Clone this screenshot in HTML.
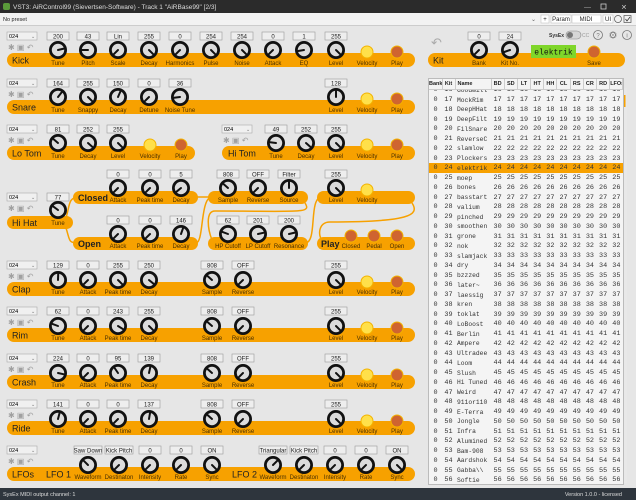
<!DOCTYPE html>
<html><head><meta charset="utf-8"><style>
body{margin:0;width:636px;height:500px;overflow:hidden;background:#e6e6e6;font-family:"Liberation Sans",sans-serif}
svg{position:absolute;left:0;top:0}
.b{fill:#eeeeee;stroke:#9a9a9a;stroke-width:.6}
.t{font-size:6px;text-anchor:middle;fill:#222}
.l{font-size:6px;text-anchor:middle;fill:#4a3000}
.n{font-size:9px;fill:#222}
.nb{font-size:9px;fill:#222;font-weight:bold}
.p path{stroke:#111;stroke-width:2;fill:none;stroke-linecap:round}
.bar{fill:#f7a100}
.vel{fill:#ffe04a;stroke:#f3b300;stroke-width:1}
.ply{fill:#cf6430;stroke:#f3b300;stroke-width:1}
.dd{fill:#f0f0f0;stroke:#aaa;stroke-width:.6}
.ic{font-size:8px;fill:#a0a0a0}
#tbl{position:absolute;left:428px;top:78px;width:194px;height:405px;background:#f4f4f4;border:1px solid #bbb;overflow:hidden}
#hd{position:absolute;left:0;top:0;width:194px;height:10px;background:#f4f4f4;z-index:2}
#rows{position:absolute;left:0;top:6.4px}
table{border-collapse:collapse;table-layout:fixed;width:194px}
td,th{padding:0;text-align:center;white-space:nowrap;overflow:hidden}
#hd th{font:bold 5.5px "Liberation Sans",sans-serif;height:10px;border-right:1px solid #ccc;border-bottom:1px solid #ccc;color:#222}
#rows td{font:6.8px "Liberation Mono",monospace;height:9.75px;color:#333}
#rows td:nth-child(3){text-align:left;padding-left:2px;font-size:6.3px}
#hd th:nth-child(3){text-align:left;padding-left:2px}
tr.s td{background:#f7a100}
</style></head><body>
<svg width="636" height="500" viewBox="0 0 636 500">
<defs><g id="k"><circle r="7.6" fill="#dcdcdc" stroke="#111" stroke-width="2.8"/></g></defs>
<rect width="636" height="13" fill="#2b2b2b"/>
<rect x="3" y="3" width="7" height="7" rx="2" fill="#5a9a3a"/>
<text x="13" y="9" font-size="6.5" fill="#ddd">VST3: AiRControl99 (Sievertsen-Software) - Track 1 "AiRBase99" [2/3]</text>
<text x="584" y="9" font-size="7" fill="#aaa">—</text>
<rect x="601" y="4" width="5" height="5" fill="none" stroke="#ccc" stroke-width=".8"/>
<text x="621" y="9.5" font-size="7" fill="#ccc">✕</text>
<rect y="13" width="636" height="13" fill="#f2f2f2"/>
<line x1="0" y1="25.5" x2="636" y2="25.5" stroke="#ccc"/>
<text x="3" y="21" font-size="5.5" fill="#222">No preset</text>
<text x="531" y="21" font-size="6" fill="#666">⌄</text>
<rect x="541" y="15" width="8" height="8" fill="#fff" stroke="#bbb" stroke-width=".5"/><text x="545" y="21" class="t">+</text>
<rect x="551" y="15" width="20" height="8" fill="#fff" stroke="#bbb" stroke-width=".5"/><text x="561" y="21" class="t">Param</text>
<rect x="572" y="15" width="29" height="8" fill="#fff" stroke="#bbb" stroke-width=".5"/><text x="586" y="21" class="t">MIDI</text>
<rect x="603" y="15" width="10" height="8" fill="#fff" stroke="#bbb" stroke-width=".5"/><text x="608" y="21" class="t">UI</text>
<circle cx="618" cy="19" r="3.5" fill="none" stroke="#555" stroke-width=".7"/>
<rect x="624" y="15.5" width="7" height="7" fill="none" stroke="#555" stroke-width=".7"/><path d="M625.5 19l1.5 2 3-4" stroke="#333" fill="none" stroke-width=".8"/>
<rect y="488" width="636" height="12" fill="#2e353d"/>
<text x="3" y="496" font-size="5.5" fill="#ddd">SysEx MIDI output channel: 1</text>
<text x="622" y="496" font-size="5.5" fill="#ddd" text-anchor="end">Version 1.0.0 - licensed</text>

<g class="bar">
<rect x="7" y="53" width="408" height="14" rx="7"/>
<rect x="428" y="53" width="197" height="14" rx="7"/>
<rect x="7" y="100" width="408" height="14" rx="7"/>
<rect x="7" y="146" width="188" height="14" rx="7"/>
<rect x="222" y="146" width="193" height="14" rx="7"/>
<rect x="7" y="216" width="66" height="13" rx="6.5"/>
<rect x="73" y="191" width="125" height="13" rx="6.5"/>
<rect x="73" y="237" width="125" height="13" rx="6.5"/>
<rect x="208" y="191" width="100" height="13" rx="6.5"/>
<rect x="208" y="237" width="100" height="13" rx="6.5"/>
<rect x="317" y="191" width="98" height="13" rx="6.5"/>
<rect x="317" y="237" width="98" height="13" rx="6.5"/>
<rect x="7" y="282" width="408" height="14" rx="7"/>
<rect x="7" y="328" width="408" height="14" rx="7"/>
<rect x="7" y="375" width="408" height="14" rx="7"/>
<rect x="7" y="421" width="408" height="14" rx="7"/>
<rect x="7" y="467" width="408" height="14" rx="7"/>
</g>
<g fill="none" stroke="#f7a100" stroke-width="1.5">
<path d="M66 218C70 205 68 198 78 197"/>
<path d="M66 228C70 240 68 243 78 243"/>
<path d="M196 197H212"/>
<path d="M196 243C204 243 200 197 212 197"/>
<path d="M305 203C312 214 300 211 215 211C205 211 208 230 212 240"/>
<path d="M305 243C318 243 308 197 322 197"/>
<path d="M412 203C420 215 410 222 330 222C318 222 318 236 322 240"/>
</g>

<text x="12" y="63.5" class="n">Kick</text>
<text x="433" y="63.5" class="n">Kit</text>
<text x="12" y="110.5" class="n">Snare</text>
<text x="12" y="156.5" class="n">Lo Tom</text>
<text x="228" y="156.5" class="n">Hi Tom</text>
<text x="12" y="226" class="n">Hi Hat</text>
<text x="78" y="201" class="nb">Closed</text>
<text x="78" y="247" class="nb">Open</text>
<text x="321" y="247" class="nb">Play</text>
<text x="12" y="292.5" class="n">Clap</text>
<text x="12" y="338.5" class="n">Rim</text>
<text x="12" y="385.5" class="n">Crash</text>
<text x="12" y="431.5" class="n">Ride</text>
<text x="12" y="477.5" class="n">LFOs</text>
<text x="46" y="477.5" class="n">LFO 1</text>
<text x="232" y="477.5" class="n">LFO 2</text>

<g>
<rect x="7" y="32" width="30" height="8" class="dd"/><text x="9" y="38" font-size="5.5">024</text><text x="31" y="38" font-size="5" fill="#777">⌄</text>
<rect x="7" y="79" width="30" height="8" class="dd"/><text x="9" y="85" font-size="5.5">024</text><text x="31" y="85" font-size="5" fill="#777">⌄</text>
<rect x="7" y="125" width="30" height="8" class="dd"/><text x="9" y="131" font-size="5.5">024</text><text x="31" y="131" font-size="5" fill="#777">⌄</text>
<rect x="222" y="125" width="30" height="8" class="dd"/><text x="224" y="131" font-size="5.5">024</text><text x="246" y="131" font-size="5" fill="#777">⌄</text>
<rect x="7" y="193" width="30" height="8" class="dd"/><text x="9" y="199" font-size="5.5">024</text><text x="31" y="199" font-size="5" fill="#777">⌄</text>
<rect x="7" y="261" width="30" height="8" class="dd"/><text x="9" y="267" font-size="5.5">024</text><text x="31" y="267" font-size="5" fill="#777">⌄</text>
<rect x="7" y="307" width="30" height="8" class="dd"/><text x="9" y="313" font-size="5.5">024</text><text x="31" y="313" font-size="5" fill="#777">⌄</text>
<rect x="7" y="354" width="30" height="8" class="dd"/><text x="9" y="360" font-size="5.5">024</text><text x="31" y="360" font-size="5" fill="#777">⌄</text>
<rect x="7" y="400" width="30" height="8" class="dd"/><text x="9" y="406" font-size="5.5">024</text><text x="31" y="406" font-size="5" fill="#777">⌄</text>
<rect x="7" y="446" width="30" height="8" class="dd"/><text x="9" y="452" font-size="5.5">024</text><text x="31" y="452" font-size="5" fill="#777">⌄</text>
</g>
<g class="ic">
<text x="8" y="50">✱ ▣ ↶</text><text x="8" y="97">✱ ▣ ↶</text><text x="8" y="143">✱ ▣ ↶</text><text x="223" y="143">✱ ▣ ↶</text>
<text x="8" y="211">✱ ▣ ↶</text><text x="8" y="279">✱ ▣ ↶</text><text x="8" y="325">✱ ▣ ↶</text><text x="8" y="372">✱ ▣ ↶</text>
<text x="8" y="418">✱ ▣ ↶</text><text x="8" y="464">✱ ▣ ↶</text>
</g>
<text x="431" y="47" font-size="13" fill="#aaa">↶</text>

<g>
<rect x="47" y="32" width="22" height="8" class="b"/><text x="58" y="38.3" class="t">200</text>
<rect x="77" y="32" width="22" height="8" class="b"/><text x="88" y="38.3" class="t">43</text>
<rect x="107" y="32" width="22" height="8" class="b"/><text x="118" y="38.3" class="t">Lin</text>
<rect x="138" y="32" width="22" height="8" class="b"/><text x="149" y="38.3" class="t">255</text>
<rect x="169" y="32" width="22" height="8" class="b"/><text x="180" y="38.3" class="t">0</text>
<rect x="200" y="32" width="22" height="8" class="b"/><text x="211" y="38.3" class="t">254</text>
<rect x="231" y="32" width="22" height="8" class="b"/><text x="242" y="38.3" class="t">254</text>
<rect x="262" y="32" width="22" height="8" class="b"/><text x="273" y="38.3" class="t">0</text>
<rect x="293" y="32" width="22" height="8" class="b"/><text x="304" y="38.3" class="t">1</text>
<rect x="325" y="32" width="22" height="8" class="b"/><text x="336" y="38.3" class="t">255</text>
<rect x="468" y="32" width="22" height="8" class="b"/><text x="479" y="38.3" class="t">0</text>
<rect x="499" y="32" width="22" height="8" class="b"/><text x="510" y="38.3" class="t">24</text>

<rect x="47" y="79" width="22" height="8" class="b"/><text x="58" y="85.3" class="t">164</text>
<rect x="77" y="79" width="22" height="8" class="b"/><text x="88" y="85.3" class="t">255</text>
<rect x="107" y="79" width="22" height="8" class="b"/><text x="118" y="85.3" class="t">150</text>
<rect x="138" y="79" width="22" height="8" class="b"/><text x="149" y="85.3" class="t">0</text>
<rect x="169" y="79" width="22" height="8" class="b"/><text x="180" y="85.3" class="t">36</text>
<rect x="325" y="79" width="22" height="8" class="b"/><text x="336" y="85.3" class="t">128</text>

<rect x="47" y="125" width="22" height="8" class="b"/><text x="58" y="131.3" class="t">81</text>
<rect x="77" y="125" width="22" height="8" class="b"/><text x="88" y="131.3" class="t">252</text>
<rect x="107" y="125" width="22" height="8" class="b"/><text x="118" y="131.3" class="t">255</text>
<rect x="265" y="125" width="22" height="8" class="b"/><text x="276" y="131.3" class="t">49</text>
<rect x="295" y="125" width="22" height="8" class="b"/><text x="306" y="131.3" class="t">252</text>
<rect x="325" y="125" width="22" height="8" class="b"/><text x="336" y="131.3" class="t">255</text>

<rect x="47" y="193" width="22" height="8" class="b"/><text x="58" y="199.3" class="t">77</text>
<rect x="107" y="170" width="22" height="8" class="b"/><text x="118" y="176.3" class="t">0</text>
<rect x="139" y="170" width="22" height="8" class="b"/><text x="150" y="176.3" class="t">0</text>
<rect x="170" y="170" width="22" height="8" class="b"/><text x="181" y="176.3" class="t">5</text>
<rect x="107" y="216" width="22" height="8" class="b"/><text x="118" y="222.3" class="t">0</text>
<rect x="139" y="216" width="22" height="8" class="b"/><text x="150" y="222.3" class="t">0</text>
<rect x="170" y="216" width="22" height="8" class="b"/><text x="181" y="222.3" class="t">146</text>
<rect x="217" y="170" width="22" height="8" class="b"/><text x="228" y="176.3" class="t">808</text>
<rect x="247" y="170" width="22" height="8" class="b"/><text x="258" y="176.3" class="t">OFF</text>
<rect x="278" y="170" width="22" height="8" class="b"/><text x="289" y="176.3" class="t">Filter</text>
<rect x="217" y="216" width="22" height="8" class="b"/><text x="228" y="222.3" class="t">62</text>
<rect x="247" y="216" width="22" height="8" class="b"/><text x="258" y="222.3" class="t">201</text>
<rect x="278" y="216" width="22" height="8" class="b"/><text x="289" y="222.3" class="t">200</text>
<rect x="325" y="170" width="22" height="8" class="b"/><text x="336" y="176.3" class="t">255</text>

<rect x="47" y="261" width="22" height="8" class="b"/><text x="58" y="267.3" class="t">129</text>
<rect x="77" y="261" width="22" height="8" class="b"/><text x="88" y="267.3" class="t">0</text>
<rect x="107" y="261" width="22" height="8" class="b"/><text x="118" y="267.3" class="t">255</text>
<rect x="138" y="261" width="22" height="8" class="b"/><text x="149" y="267.3" class="t">250</text>
<rect x="201" y="261" width="22" height="8" class="b"/><text x="212" y="267.3" class="t">808</text>
<rect x="232" y="261" width="22" height="8" class="b"/><text x="243" y="267.3" class="t">OFF</text>
<rect x="325" y="261" width="22" height="8" class="b"/><text x="336" y="267.3" class="t">255</text>

<rect x="47" y="307" width="22" height="8" class="b"/><text x="58" y="313.3" class="t">62</text>
<rect x="77" y="307" width="22" height="8" class="b"/><text x="88" y="313.3" class="t">0</text>
<rect x="107" y="307" width="22" height="8" class="b"/><text x="118" y="313.3" class="t">243</text>
<rect x="138" y="307" width="22" height="8" class="b"/><text x="149" y="313.3" class="t">255</text>
<rect x="201" y="307" width="22" height="8" class="b"/><text x="212" y="313.3" class="t">808</text>
<rect x="232" y="307" width="22" height="8" class="b"/><text x="243" y="313.3" class="t">OFF</text>
<rect x="325" y="307" width="22" height="8" class="b"/><text x="336" y="313.3" class="t">255</text>

<rect x="47" y="354" width="22" height="8" class="b"/><text x="58" y="360.3" class="t">224</text>
<rect x="77" y="354" width="22" height="8" class="b"/><text x="88" y="360.3" class="t">0</text>
<rect x="107" y="354" width="22" height="8" class="b"/><text x="118" y="360.3" class="t">95</text>
<rect x="138" y="354" width="22" height="8" class="b"/><text x="149" y="360.3" class="t">139</text>
<rect x="201" y="354" width="22" height="8" class="b"/><text x="212" y="360.3" class="t">808</text>
<rect x="232" y="354" width="22" height="8" class="b"/><text x="243" y="360.3" class="t">OFF</text>
<rect x="325" y="354" width="22" height="8" class="b"/><text x="336" y="360.3" class="t">255</text>

<rect x="47" y="400" width="22" height="8" class="b"/><text x="58" y="406.3" class="t">141</text>
<rect x="77" y="400" width="22" height="8" class="b"/><text x="88" y="406.3" class="t">0</text>
<rect x="107" y="400" width="22" height="8" class="b"/><text x="118" y="406.3" class="t">0</text>
<rect x="138" y="400" width="22" height="8" class="b"/><text x="149" y="406.3" class="t">137</text>
<rect x="201" y="400" width="22" height="8" class="b"/><text x="212" y="406.3" class="t">808</text>
<rect x="232" y="400" width="22" height="8" class="b"/><text x="243" y="406.3" class="t">OFF</text>
<rect x="325" y="400" width="22" height="8" class="b"/><text x="336" y="406.3" class="t">255</text>

<rect x="74" y="446" width="28" height="8" class="b"/><text x="88" y="452.3" class="t">Saw Down</text>
<rect x="105" y="446" width="28" height="8" class="b"/><text x="119" y="452.3" class="t">Kick Pitch</text>
<rect x="139" y="446" width="22" height="8" class="b"/><text x="150" y="452.3" class="t">0</text>
<rect x="170" y="446" width="22" height="8" class="b"/><text x="181" y="452.3" class="t">0</text>
<rect x="201" y="446" width="22" height="8" class="b"/><text x="212" y="452.3" class="t">ON</text>
<rect x="259" y="446" width="28" height="8" class="b"/><text x="273" y="452.3" class="t">Triangular</text>
<rect x="290" y="446" width="28" height="8" class="b"/><text x="304" y="452.3" class="t">Kick Pitch</text>
<rect x="324" y="446" width="22" height="8" class="b"/><text x="335" y="452.3" class="t">0</text>
<rect x="355" y="446" width="22" height="8" class="b"/><text x="366" y="452.3" class="t">0</text>
<rect x="386" y="446" width="22" height="8" class="b"/><text x="397" y="452.3" class="t">ON</text>
</g>

<g class="p">
<use href="#k" x="58" y="50"/><path d="M58 50l5.8-1.4"/>
<use href="#k" x="88" y="50"/><path d="M88 50l-6 0"/>
<use href="#k" x="118" y="50"/><path d="M118 50l-4.2 4.2"/>
<use href="#k" x="149" y="50"/><path d="M149 50l4.2 4.2"/>
<use href="#k" x="180" y="50"/><path d="M180 50l-4.2 4.2"/>
<use href="#k" x="211" y="50"/><path d="M211 50l4.2 4.2"/>
<use href="#k" x="242" y="50"/><path d="M242 50l4.2 4.2"/>
<use href="#k" x="273" y="50"/><path d="M273 50l-4.2 4.2"/>
<use href="#k" x="304" y="50"/><path d="M304 50l-5.9 1"/>
<use href="#k" x="336" y="50"/><path d="M336 50l4.2 4.2"/>
<use href="#k" x="479" y="50"/><path d="M479 50l-4.2 4.2"/>
<use href="#k" x="510" y="50"/><path d="M510 50l-5.7 2"/>

<use href="#k" x="58" y="97"/><path d="M58 97l3.7-4.7"/>
<use href="#k" x="88" y="97"/><path d="M88 97l4.2 4.2"/>
<use href="#k" x="118" y="97"/><path d="M118 97l2.4-5.5"/>
<use href="#k" x="149" y="97"/><path d="M149 97l-4.2 4.2"/>
<use href="#k" x="180" y="97"/><path d="M180 97l-6 .7"/>
<use href="#k" x="336" y="97"/><path d="M336 97l0-6"/>

<use href="#k" x="58" y="143"/><path d="M58 143l-4.5-3.9"/>
<use href="#k" x="88" y="143"/><path d="M88 143l4.5 4"/>
<use href="#k" x="118" y="143"/><path d="M118 143l4.2 4.2"/>
<use href="#k" x="276" y="143"/><path d="M276 143l-6-.7"/>
<use href="#k" x="306" y="143"/><path d="M306 143l4.5 4"/>
<use href="#k" x="336" y="143"/><path d="M336 143l4.2 4.2"/>

<use href="#k" x="58" y="210"/><path d="M58 210l-4.8-3.6"/>
<use href="#k" x="118" y="188"/><path d="M118 188l-4.2 4.2"/>
<use href="#k" x="150" y="188"/><path d="M150 188l-4.2 4.2"/>
<use href="#k" x="181" y="188"/><path d="M181 188l-4.6 3.8"/>
<use href="#k" x="118" y="234"/><path d="M118 234l-4.2 4.2"/>
<use href="#k" x="150" y="234"/><path d="M150 234l-4.2 4.2"/>
<use href="#k" x="181" y="234"/><path d="M181 234l2-5.7"/>
<use href="#k" x="228" y="188"/><path d="M228 188l-4.5-4"/>
<use href="#k" x="258" y="188"/><path d="M258 188l-4.2 4.2"/>
<use href="#k" x="289" y="188"/><path d="M289 188l0-6"/>
<use href="#k" x="228" y="234"/><path d="M228 234l-5.6-2.1"/>
<use href="#k" x="258" y="234"/><path d="M258 234l5.9-1.3"/>
<use href="#k" x="289" y="234"/><path d="M289 234l5.8-1.4"/>
<use href="#k" x="336" y="188"/><path d="M336 188l4.2 4.2"/>

<use href="#k" x="58" y="280"/><path d="M58 280l.2-6"/>
<use href="#k" x="88" y="280"/><path d="M88 280l-4.2 4.2"/>
<use href="#k" x="118" y="280"/><path d="M118 280l4.2 4.2"/>
<use href="#k" x="149" y="280"/><path d="M149 280l4.6 3.8"/>
<use href="#k" x="212" y="280"/><path d="M212 280l-4.5-4"/>
<use href="#k" x="243" y="280"/><path d="M243 280l-4.2 4.2"/>
<use href="#k" x="336" y="280"/><path d="M336 280l4.2 4.2"/>

<use href="#k" x="58" y="326"/><path d="M58 326l-5.6-2.1"/>
<use href="#k" x="88" y="326"/><path d="M88 326l-4.2 4.2"/>
<use href="#k" x="118" y="326"/><path d="M118 326l5.1 3.2"/>
<use href="#k" x="149" y="326"/><path d="M149 326l4.2 4.2"/>
<use href="#k" x="212" y="326"/><path d="M212 326l-4.5-4"/>
<use href="#k" x="243" y="326"/><path d="M243 326l-4.2 4.2"/>
<use href="#k" x="336" y="326"/><path d="M336 326l4.2 4.2"/>

<use href="#k" x="58" y="373"/><path d="M58 373l5.9 1.3"/>
<use href="#k" x="88" y="373"/><path d="M88 373l-4.2 4.2"/>
<use href="#k" x="118" y="373"/><path d="M118 373l-3.4-5"/>
<use href="#k" x="149" y="373"/><path d="M149 373l1.3-5.9"/>
<use href="#k" x="212" y="373"/><path d="M212 373l-4.5-4"/>
<use href="#k" x="243" y="373"/><path d="M243 373l-4.2 4.2"/>
<use href="#k" x="336" y="373"/><path d="M336 373l4.2 4.2"/>

<use href="#k" x="58" y="419"/><path d="M58 419l1.5-5.8"/>
<use href="#k" x="88" y="419"/><path d="M88 419l-4.2 4.2"/>
<use href="#k" x="118" y="419"/><path d="M118 419l-4.2 4.2"/>
<use href="#k" x="149" y="419"/><path d="M149 419l1-5.9"/>
<use href="#k" x="212" y="419"/><path d="M212 419l-4.5-4"/>
<use href="#k" x="243" y="419"/><path d="M243 419l-4.2 4.2"/>
<use href="#k" x="336" y="419"/><path d="M336 419l4.2 4.2"/>

<use href="#k" x="88" y="465"/><path d="M88 465l-4.2-4.2"/>
<use href="#k" x="119" y="465"/><path d="M119 465l-4.2 4.2"/>
<use href="#k" x="150" y="465"/><path d="M150 465l-4.2 4.2"/>
<use href="#k" x="181" y="465"/><path d="M181 465l-4.2 4.2"/>
<use href="#k" x="212" y="465"/><path d="M212 465l4.2 4.2"/>
<use href="#k" x="273" y="465"/><path d="M273 465l4.2-4.2"/>
<use href="#k" x="304" y="465"/><path d="M304 465l-4.2 4.2"/>
<use href="#k" x="335" y="465"/><path d="M335 465l-4.2 4.2"/>
<use href="#k" x="366" y="465"/><path d="M366 465l-4.2 4.2"/>
<use href="#k" x="397" y="465"/><path d="M397 465l4.2 4.2"/>
</g>

<g>
<circle cx="367" cy="52" r="6" class="vel"/><circle cx="397" cy="52" r="6" class="ply"/>
<circle cx="367" cy="99" r="6" class="vel"/><circle cx="397" cy="99" r="6" class="ply"/>
<circle cx="150" cy="145" r="6" class="vel"/><circle cx="181" cy="145" r="6" class="ply"/>
<circle cx="367" cy="145" r="6" class="vel"/><circle cx="397" cy="145" r="6" class="ply"/>
<circle cx="367" cy="190" r="6" class="vel"/>
<circle cx="351" cy="236" r="6" class="ply"/><circle cx="374" cy="236" r="6" class="ply"/><circle cx="397" cy="236" r="6" class="ply"/>
<circle cx="367" cy="282" r="6" class="vel"/><circle cx="397" cy="282" r="6" class="ply"/>
<circle cx="367" cy="328" r="6" class="vel"/><circle cx="397" cy="328" r="6" class="ply"/>
<circle cx="367" cy="375" r="6" class="vel"/><circle cx="397" cy="375" r="6" class="ply"/>
<circle cx="367" cy="421" r="6" class="vel"/><circle cx="397" cy="421" r="6" class="ply"/>
<circle cx="594" cy="52" r="6" class="ply"/>
</g>

<rect x="531" y="45" width="45" height="13" fill="#7fd62a"/>
<text x="553.5" y="54.5" font-family="Liberation Mono,monospace" font-size="8" text-anchor="middle" fill="#111">elektrik</text>
<text x="564" y="37" font-size="5" font-weight="bold" text-anchor="end" fill="#333">SysEx</text>
<rect x="566" y="31" width="15" height="8" rx="4" fill="#d6d6d6" stroke="#888" stroke-width=".6"/><circle cx="570" cy="35" r="3" fill="#777"/>
<text x="582" y="37" font-size="5" fill="#999">CC</text>
<circle cx="598" cy="35" r="4.5" fill="none" stroke="#777" stroke-width=".8"/><text x="598" y="37.3" font-size="6" text-anchor="middle" fill="#777">?</text>
<text x="613" y="38.5" font-size="10" text-anchor="middle" fill="#777">⚙</text>
<circle cx="627" cy="35" r="4.5" fill="none" stroke="#777" stroke-width=".8"/><text x="627" y="37.3" font-size="6" text-anchor="middle" fill="#777">i</text>

<g class="l">
<text x="58" y="65">Tune</text><text x="88" y="65">Pitch</text><text x="118" y="65">Scale</text><text x="149" y="65">Decay</text><text x="180" y="65">Harmonics</text><text x="211" y="65">Pulse</text><text x="242" y="65">Noise</text><text x="273" y="65">Attack</text><text x="304" y="65">EQ</text><text x="336" y="65">Level</text><text x="367" y="65">Velocity</text><text x="397" y="65">Play</text>
<text x="479" y="65">Bank</text><text x="510" y="65">Kit No.</text><text x="594" y="65">Save</text>
<text x="58" y="112">Tune</text><text x="88" y="112">Snappy</text><text x="118" y="112">Decay</text><text x="149" y="112">Detune</text><text x="180" y="112">Noise Tune</text><text x="336" y="112">Level</text><text x="367" y="112">Velocity</text><text x="397" y="112">Play</text>
<text x="58" y="158">Tune</text><text x="88" y="158">Decay</text><text x="118" y="158">Level</text><text x="150" y="158">Velocity</text><text x="181" y="158">Play</text>
<text x="276" y="158">Tune</text><text x="306" y="158">Decay</text><text x="336" y="158">Level</text><text x="367" y="158">Velocity</text><text x="397" y="158">Play</text>
<text x="58" y="225">Tune</text>
<text x="118" y="202">Attack</text><text x="150" y="202">Peak time</text><text x="181" y="202">Decay</text>
<text x="118" y="248">Attack</text><text x="150" y="248">Peak time</text><text x="181" y="248">Decay</text>
<text x="228" y="202">Sample</text><text x="258" y="202">Reverse</text><text x="289" y="202">Source</text>
<text x="228" y="248">HP Cutoff</text><text x="258" y="248">LP Cutoff</text><text x="289" y="248">Resonance</text>
<text x="336" y="202">Level</text><text x="367" y="202">Velocity</text>
<text x="351" y="248">Closed</text><text x="374" y="248">Pedal</text><text x="397" y="248">Open</text>
<text x="58" y="294">Tune</text><text x="88" y="294">Attack</text><text x="118" y="294">Peak time</text><text x="149" y="294">Decay</text><text x="212" y="294">Sample</text><text x="243" y="294">Reverse</text><text x="336" y="294">Level</text><text x="367" y="294">Velocity</text><text x="397" y="294">Play</text>
<text x="58" y="340">Tune</text><text x="88" y="340">Attack</text><text x="118" y="340">Peak time</text><text x="149" y="340">Decay</text><text x="212" y="340">Sample</text><text x="243" y="340">Reverse</text><text x="336" y="340">Level</text><text x="367" y="340">Velocity</text><text x="397" y="340">Play</text>
<text x="58" y="387">Tune</text><text x="88" y="387">Attack</text><text x="118" y="387">Peak time</text><text x="149" y="387">Decay</text><text x="212" y="387">Sample</text><text x="243" y="387">Reverse</text><text x="336" y="387">Level</text><text x="367" y="387">Velocity</text><text x="397" y="387">Play</text>
<text x="58" y="433">Tune</text><text x="88" y="433">Attack</text><text x="118" y="433">Peak time</text><text x="149" y="433">Decay</text><text x="212" y="433">Sample</text><text x="243" y="433">Reverse</text><text x="336" y="433">Level</text><text x="367" y="433">Velocity</text><text x="397" y="433">Play</text>
<text x="88" y="479">Waveform</text><text x="119" y="479">Destinaton</text><text x="150" y="479">Intensity</text><text x="181" y="479">Rate</text><text x="212" y="479">Sync</text>
<text x="273" y="479">Waveform</text><text x="304" y="479">Destinaton</text><text x="335" y="479">Intensity</text><text x="366" y="479">Rate</text><text x="397" y="479">Sync</text>
</g>
<rect x="622" y="88" width="5" height="395" fill="#e8e8e8"/>
<rect x="622.5" y="95" width="3" height="12" fill="#f7a100"/>
</svg>

<div id="tbl">
<div id="hd"><table><colgroup><col style="width:13px"><col style="width:13px"><col style="width:36px"><col span="10" style="width:13.2px"></colgroup>
<tr><th>Bank</th><th>Kit</th><th>Name</th><th>BD</th><th>SD</th><th>LT</th><th>HT</th><th>HH</th><th>CL</th><th>RS</th><th>CR</th><th>RD</th><th>LFOs</th></tr></table></div>
<div id="rows"><table><colgroup><col style="width:13px"><col style="width:13px"><col style="width:36px"><col span="10" style="width:13.2px"></colgroup>
<tr><td>0<td>16<td>Goodwill<td>16<td>16<td>16<td>16<td>16<td>16<td>16<td>16<td>16<td>16</tr>
<tr><td>0<td>17<td>MockRim<td>17<td>17<td>17<td>17<td>17<td>17<td>17<td>17<td>17<td>17</tr>
<tr><td>0<td>18<td>DeepHHat<td>18<td>18<td>18<td>18<td>18<td>18<td>18<td>18<td>18<td>18</tr>
<tr><td>0<td>19<td>DeepFilt<td>19<td>19<td>19<td>19<td>19<td>19<td>19<td>19<td>19<td>19</tr>
<tr><td>0<td>20<td>FilSnare<td>20<td>20<td>20<td>20<td>20<td>20<td>20<td>20<td>20<td>20</tr>
<tr><td>0<td>21<td>ReverseC<td>21<td>21<td>21<td>21<td>21<td>21<td>21<td>21<td>21<td>21</tr>
<tr><td>0<td>22<td>slamlow<td>22<td>22<td>22<td>22<td>22<td>22<td>22<td>22<td>22<td>22</tr>
<tr><td>0<td>23<td>Plockers<td>23<td>23<td>23<td>23<td>23<td>23<td>23<td>23<td>23<td>23</tr>
<tr class="s"><td>0<td>24<td>elektrik<td>24<td>24<td>24<td>24<td>24<td>24<td>24<td>24<td>24<td>24</tr>
<tr><td>0<td>25<td>moep<td>25<td>25<td>25<td>25<td>25<td>25<td>25<td>25<td>25<td>25</tr>
<tr><td>0<td>26<td>bones<td>26<td>26<td>26<td>26<td>26<td>26<td>26<td>26<td>26<td>26</tr>
<tr><td>0<td>27<td>basstart<td>27<td>27<td>27<td>27<td>27<td>27<td>27<td>27<td>27<td>27</tr>
<tr><td>0<td>28<td>valium<td>28<td>28<td>28<td>28<td>28<td>28<td>28<td>28<td>28<td>28</tr>
<tr><td>0<td>29<td>pinched<td>29<td>29<td>29<td>29<td>29<td>29<td>29<td>29<td>29<td>29</tr>
<tr><td>0<td>30<td>smoothen<td>30<td>30<td>30<td>30<td>30<td>30<td>30<td>30<td>30<td>30</tr>
<tr><td>0<td>31<td>grone<td>31<td>31<td>31<td>31<td>31<td>31<td>31<td>31<td>31<td>31</tr>
<tr><td>0<td>32<td>nok<td>32<td>32<td>32<td>32<td>32<td>32<td>32<td>32<td>32<td>32</tr>
<tr><td>0<td>33<td>slamjack<td>33<td>33<td>33<td>33<td>33<td>33<td>33<td>33<td>33<td>33</tr>
<tr><td>0<td>34<td>dry<td>34<td>34<td>34<td>34<td>34<td>34<td>34<td>34<td>34<td>34</tr>
<tr><td>0<td>35<td>bzzzed<td>35<td>35<td>35<td>35<td>35<td>35<td>35<td>35<td>35<td>35</tr>
<tr><td>0<td>36<td>later~<td>36<td>36<td>36<td>36<td>36<td>36<td>36<td>36<td>36<td>36</tr>
<tr><td>0<td>37<td>laessig<td>37<td>37<td>37<td>37<td>37<td>37<td>37<td>37<td>37<td>37</tr>
<tr><td>0<td>38<td>kren<td>38<td>38<td>38<td>38<td>38<td>38<td>38<td>38<td>38<td>38</tr>
<tr><td>0<td>39<td>toklat<td>39<td>39<td>39<td>39<td>39<td>39<td>39<td>39<td>39<td>39</tr>
<tr><td>0<td>40<td>LoBoost<td>40<td>40<td>40<td>40<td>40<td>40<td>40<td>40<td>40<td>40</tr>
<tr><td>0<td>41<td>Berlin<td>41<td>41<td>41<td>41<td>41<td>41<td>41<td>41<td>41<td>41</tr>
<tr><td>0<td>42<td>Ampere<td>42<td>42<td>42<td>42<td>42<td>42<td>42<td>42<td>42<td>42</tr>
<tr><td>0<td>43<td>Ultradee<td>43<td>43<td>43<td>43<td>43<td>43<td>43<td>43<td>43<td>43</tr>
<tr><td>0<td>44<td>Loom<td>44<td>44<td>44<td>44<td>44<td>44<td>44<td>44<td>44<td>44</tr>
<tr><td>0<td>45<td>Slush<td>45<td>45<td>45<td>45<td>45<td>45<td>45<td>45<td>45<td>45</tr>
<tr><td>0<td>46<td>Hi Tuned<td>46<td>46<td>46<td>46<td>46<td>46<td>46<td>46<td>46<td>46</tr>
<tr><td>0<td>47<td>Weird<td>47<td>47<td>47<td>47<td>47<td>47<td>47<td>47<td>47<td>47</tr>
<tr><td>0<td>48<td>911or110<td>48<td>48<td>48<td>48<td>48<td>48<td>48<td>48<td>48<td>48</tr>
<tr><td>0<td>49<td>E-Terra<td>49<td>49<td>49<td>49<td>49<td>49<td>49<td>49<td>49<td>49</tr>
<tr><td>0<td>50<td>Jongle<td>50<td>50<td>50<td>50<td>50<td>50<td>50<td>50<td>50<td>50</tr>
<tr><td>0<td>51<td>Infra<td>51<td>51<td>51<td>51<td>51<td>51<td>51<td>51<td>51<td>51</tr>
<tr><td>0<td>52<td>Alumined<td>52<td>52<td>52<td>52<td>52<td>52<td>52<td>52<td>52<td>52</tr>
<tr><td>0<td>53<td>Bam-908<td>53<td>53<td>53<td>53<td>53<td>53<td>53<td>53<td>53<td>53</tr>
<tr><td>0<td>54<td>Aardshok<td>54<td>54<td>54<td>54<td>54<td>54<td>54<td>54<td>54<td>54</tr>
<tr><td>0<td>55<td>Gabba\\<td>55<td>55<td>55<td>55<td>55<td>55<td>55<td>55<td>55<td>55</tr>
<tr><td>0<td>56<td>Softie<td>56<td>56<td>56<td>56<td>56<td>56<td>56<td>56<td>56<td>56</tr>
</table></div>
</div>
</body></html>
